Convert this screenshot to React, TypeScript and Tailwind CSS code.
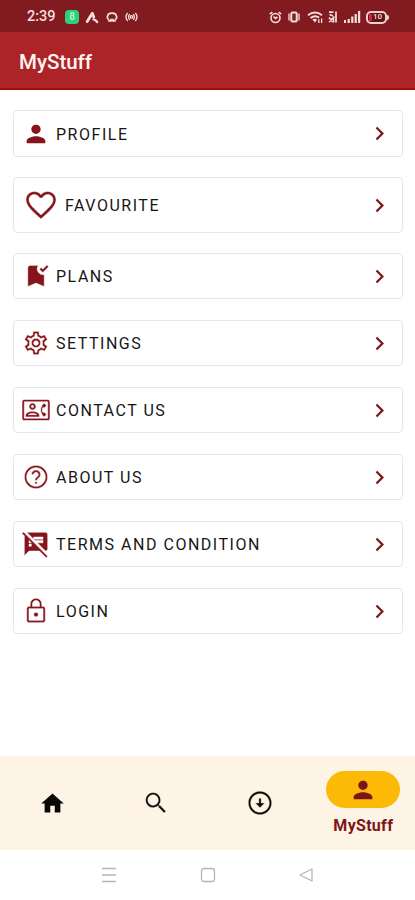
import type { ComponentType } from "react";
import {
  MdPerson,
  MdFavoriteBorder,
  MdBookmarkAdded,
  MdOutlineSettings,
  MdOutlineContactPhone,
  MdHelpOutline,
  MdSpeakerNotesOff,
  MdOutlineLock,
  MdChevronRight,
  MdHome,
  MdSearch,
  MdOutlineArrowCircleDown,
} from "react-icons/md";

type Item = {
  label: string;
  Icon: ComponentType<{ className?: string }>;
  row: string;
  icon: string;
};

const items: Item[] = [
  { label: "PROFILE", Icon: MdPerson, row: "h-[47px] mb-[20px]", icon: "size-7" },
  { label: "FAVOURITE", Icon: MdFavoriteBorder, row: "h-[56px] mb-[20px]", icon: "size-[36px] ml-px stroke-white stroke-[0.3]" },
  { label: "PLANS", Icon: MdBookmarkAdded, row: "h-[46px] mb-[21px]", icon: "size-7 stroke-white stroke-[0.3]" },
  { label: "SETTINGS", Icon: MdOutlineSettings, row: "h-[46px] mb-[21px]", icon: "size-7 stroke-white stroke-[0.5]" },
  { label: "CONTACT US", Icon: MdOutlineContactPhone, row: "h-[46px] mb-[21px]", icon: "size-7 stroke-white stroke-[0.5]" },
  { label: "ABOUT US", Icon: MdHelpOutline, row: "h-[46px] mb-[21px]", icon: "size-7 stroke-white stroke-[0.5]" },
  { label: "TERMS AND CONDITION", Icon: MdSpeakerNotesOff, row: "h-[46px] mb-[21px]", icon: "size-7 stroke-white stroke-[0.4]" },
  { label: "LOGIN", Icon: MdOutlineLock, row: "h-[46px]", icon: "size-7 stroke-white stroke-[0.5]" },
];

function StatusBar() {
  return (
    <div className="flex h-8 items-center bg-[#821b20] pl-[27px] pr-[26px] pt-[2px] text-[#f6dede]">
      <span className="w-[38px] text-[14.5px] font-medium leading-none">2:39</span>
      <span className="flex size-[14px] items-center justify-center rounded-[4px] bg-[#2fd07c] text-[10px] font-bold leading-none text-[#a5f5cb]">
        8
      </span>
      <svg className="ml-[6px] h-[13px] w-[14px]" viewBox="0 0 14 13" fill="none" stroke="currentColor" strokeLinecap="round">
        <path d="M7.200 2.500L2.200 10.500" strokeWidth="2.800" />
        <path d="M7.400 2.500l1.400 3.600" strokeWidth="2.800" />
        <path d="M8.400 8.400c1.800.2 2.800 1.200 3.800 2.600" strokeWidth="2.200" />
      </svg>
      <svg className="ml-[7px] h-[12px] w-[12px]" viewBox="0 0 12 12" fill="none" stroke="currentColor" strokeWidth="1.700">
        <path d="M3.200 8.600C1 7.800.9 6 1.800 4.800 2 2.800 4 2.200 6 2.200s4 .6 4.200 2.600C11.100 6 11 7.800 8.800 8.600" />
        <path d="M2.200 9.800h2.800V8.600h2v1.200h2.800" />
      </svg>
      <svg className="ml-[7px] h-[12px] w-[13px]" viewBox="0 0 13 12" fill="none" stroke="currentColor" strokeWidth="1.300">
        <path d="M2.600 2Q-.6 6 2.600 10M4.600 3.200Q2.600 6 4.600 8.800M8.400 3.200Q10.400 6 8.400 8.800M10.400 2Q13.600 6 10.400 10" />
        <circle cx="6.500" cy="5.900" r="1.200" />
      </svg>
      <div className="ml-auto flex items-center">
        <svg className="h-[13px] w-[13px]" viewBox="0 0 13 13" fill="none" stroke="currentColor" strokeWidth="1.600">
          <circle cx="6.500" cy="7" r="4.500" />
          <path d="M.8 3.200L3.400 1M12.200 3.200L9.600 1M4.500 5.500l2 2 2-1.500" />
        </svg>
        <svg className="ml-[5px] h-[12px] w-[14px]" viewBox="0 0 14 12" fill="none" stroke="currentColor" strokeWidth="2">
          <rect x="4.300" y="1.500" width="5.400" height="9" rx="1.500" />
          <path d="M2 2.500v7M12 2.500v7" strokeWidth="1.300" />
        </svg>
        <svg className="ml-[6px] h-[13px] w-[17px]" viewBox="0 0 17 13" fill="none" stroke="currentColor" strokeWidth="2">
          <path d="M1 4.200Q8 -1 15 4.200M3.500 7Q8 3.600 12 6.600" />
          <path d="M5.400 8.600Q8 7 10 8.600L8 11.500z" fill="currentColor" stroke="none" />
          <path d="M11.800 12V8.200M14.600 7.500V12" strokeWidth="1.300" />
        </svg>
        <svg className="ml-[4px] h-[12px] w-[10px]" viewBox="0 0 10 12" fill="none" stroke="currentColor">
          <path d="M1 1.200h4.500M1.500 3.500L5 5M8 .5v11M1 6.500l3.500 4.500M1 11l5.500-5.500M5.500 7.500v4" strokeWidth="1.700" />
        </svg>
        <svg className="ml-[6px] h-[12px] w-[17px]" viewBox="0 0 17 12" fill="currentColor">
          <rect x="0" y="9" width="2" height="3" />
          <rect x="3.600" y="8" width="2.200" height="4" />
          <rect x="7.200" y="5.500" width="2.200" height="6.500" />
          <rect x="10.600" y="3" width="2.200" height="9" />
          <rect x="14" y="0" width="2.200" height="12" />
        </svg>
        <div className="ml-[5px] flex h-[13px] w-[21px] items-center rounded-[5px] border-2 border-[#f1cfcf] bg-[#5e1519] pl-[1px]">
          <span className="h-[7px] w-[3px] bg-[#e01c3c]" />
          <span className="ml-px text-[8px] font-medium leading-none">10</span>
        </div>
        <span className="h-[5px] w-[2px] rounded-r bg-[#f1cfcf]" />
      </div>
    </div>
  );
}

function MenuRow({ label, Icon, row, icon }: Item) {
  return (
    <li className={`flex items-center rounded-[4px] border border-[#e7e7e7] pl-[8px] pr-[9px] ${row}`}>
      <Icon className={`shrink-0 text-[#86151b] ${icon}`} />
      <span className="ml-[6px] whitespace-nowrap pt-[2px] text-[16px] leading-none tracking-[1.52px] text-[#161616]">
        {label}
      </span>
      <MdChevronRight className="ml-auto size-[27px] shrink-0 text-[#7c1a1f]" />
    </li>
  );
}

export default function App() {
  return (
    <div className="flex h-[900px] w-[415px] flex-col overflow-hidden bg-white font-['Roboto',sans-serif]">
      <StatusBar />
      <header className="flex h-[58px] items-center border-b-2 border-[#a40d0f] bg-[#ac2428] pl-[19px] pt-[4px]">
        <h1 className="text-[20.5px] font-medium leading-none text-[#fff4f2]">MyStuff</h1>
      </header>

      <main className="flex-1 pl-[13px] pr-[12px] pt-[20px]">
        <ul>
          {items.map((item) => (
            <MenuRow key={item.label} {...item} />
          ))}
        </ul>
      </main>

      <nav className="grid h-[94px] shrink-0 grid-cols-4 bg-[#fef4e6] pl-px text-[#0a0805]">
        <div className="flex items-center justify-center">
          <MdHome className="size-[27px]" />
        </div>
        <div className="flex items-center justify-center">
          <MdSearch className="size-7 stroke-[#fef4e6] stroke-[0.4]" />
        </div>
        <div className="flex items-center justify-center">
          <MdOutlineArrowCircleDown className="size-7 stroke-[#fef4e6] stroke-[0.3]" />
        </div>
        <div className="flex flex-col items-center pt-[15px] text-[#7c1518]">
          <div className="flex h-[37px] w-[74px] items-center justify-center rounded-full bg-[#fcba06]">
            <MdPerson className="size-7" />
          </div>
          <span className="mt-[10px] text-[16px] font-bold leading-none tracking-[0.3px]">MyStuff</span>
        </div>
      </nav>

      <div className="flex h-[50px] shrink-0 items-center justify-between pl-[101px] pr-[101px]">
        <svg className="h-4 w-4" viewBox="0 0 16 16" stroke="#b5b5b5" strokeWidth="1.500">
          <path d="M1 1.500h14M1 8h14M1 14.500h14" />
        </svg>
        <svg className="h-4 w-4" viewBox="0 0 16 16" fill="none" stroke="#b5b5b5" strokeWidth="1.300">
          <rect x="1.500" y="1.500" width="13" height="13" rx="2.500" />
        </svg>
        <svg className="h-4 w-4" viewBox="0 0 16 16" fill="none" stroke="#b5b5b5" strokeWidth="1.300" strokeLinejoin="round">
          <path d="M14 2v12L2 8z" />
        </svg>
      </div>
    </div>
  );
}
